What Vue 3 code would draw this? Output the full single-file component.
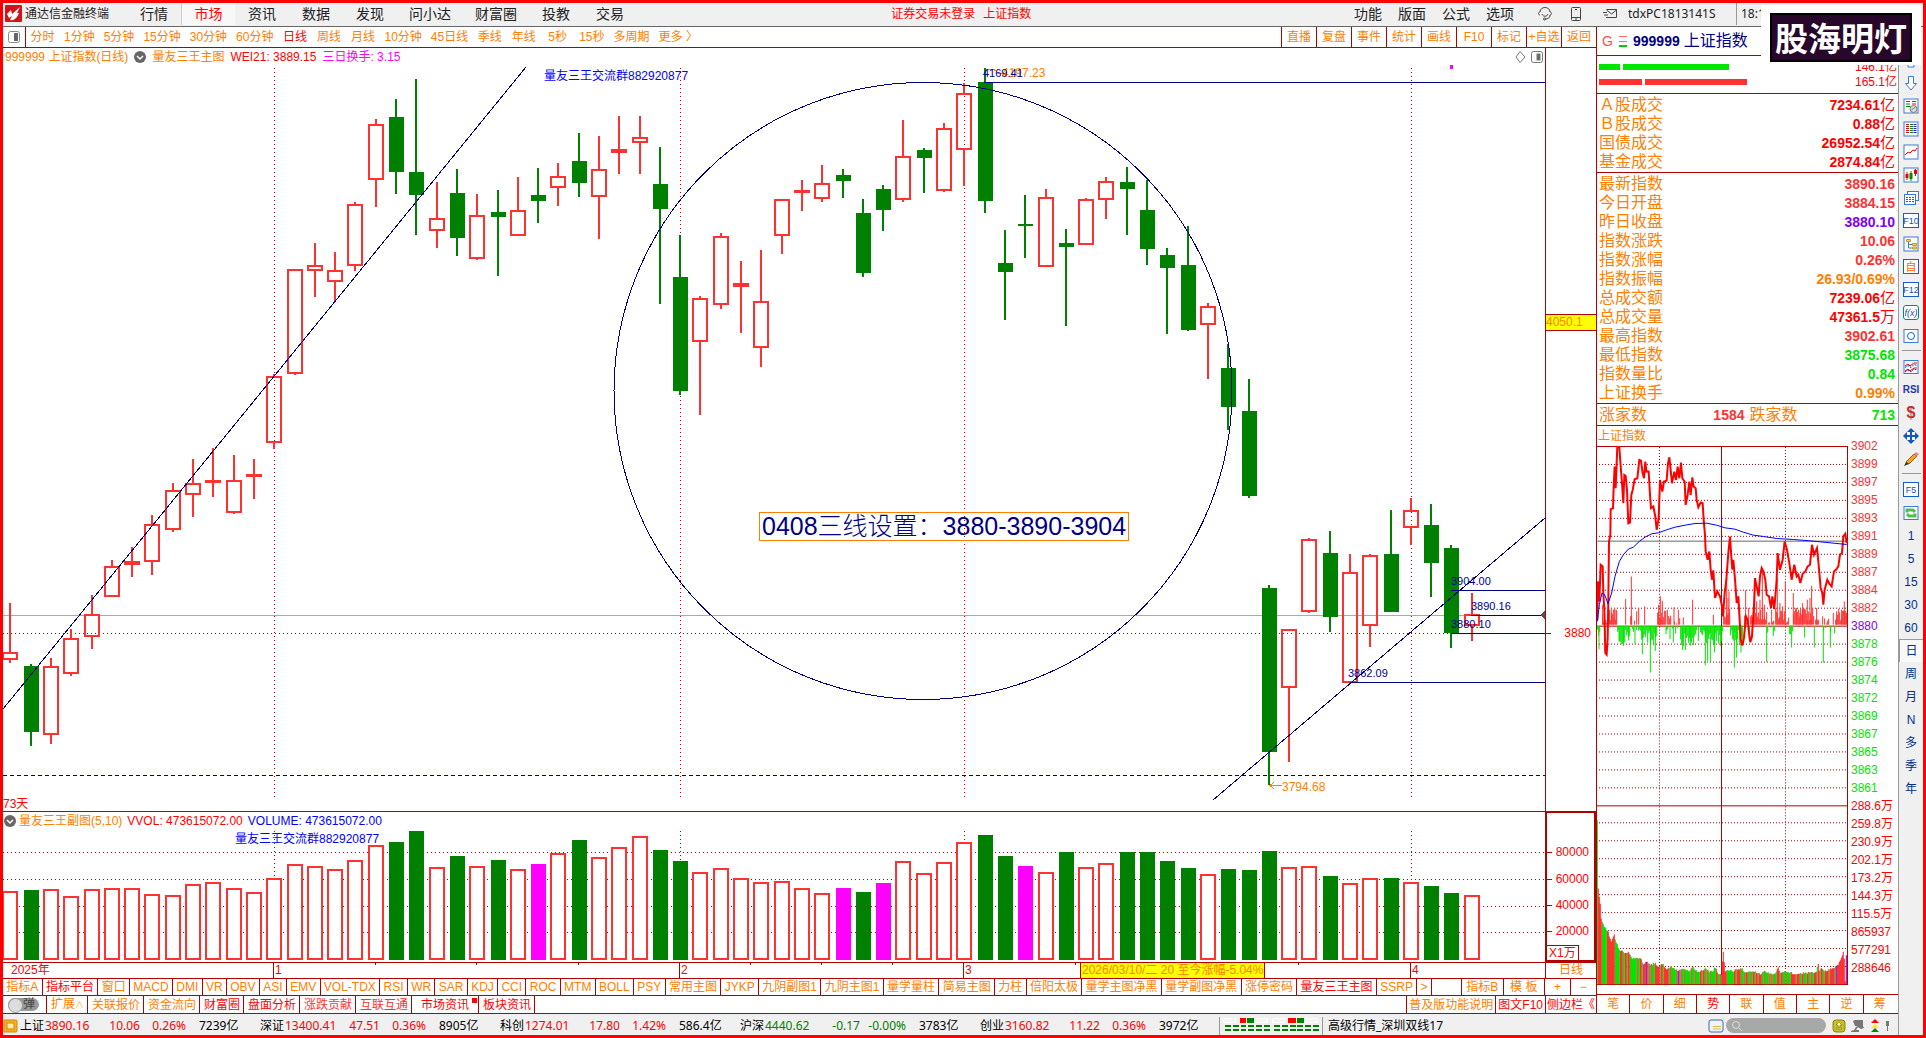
<script setup>
const menus = ['行情', '市场', '资讯', '数据', '发现', '问小达', '财富圈', '投教', '交易']
const tools = ['功能', '版面', '公式', '选项']
const periods = ['分时', '1分钟', '5分钟', '15分钟', '30分钟', '60分钟', '日线', '周线', '月线', '10分钟', '45日线', '季线', '年线', '5秒', '15秒', '多周期', '更多 〉']
const actions = ['直播', '复盘', '事件', '统计', '画线', 'F10', '标记', '+自选', '返回']

const indicators = ['指标A', '指标平台', '窗口', 'MACD', 'DMI', 'VR', 'OBV', 'ASI', 'EMV', 'VOL-TDX', 'RSI', 'WR', 'SAR', 'KDJ', 'CCI', 'ROC', 'MTM', 'BOLL', 'PSY', '常用主图', 'JYKP', '九阴副图1', '九阴主图1', '量学量柱', '简易主图', '力柱', '倍阳太极', '量学主图净黑', '量学副图净黑', '涨停密码', '量友三王主图', 'SSRP', '>']
const redTabs = ['指标平台', '量友三王主图']
const extras = [
  { t: '关联报价' }, { t: '资金流向' },
  { t: '财富圈', c: 'red' }, { t: '盘面分析', c: 'red' },
  { t: '涨跌贡献', c: 'soft' }, { t: '互联互通', c: 'soft' },
  { t: '市场资讯', c: 'red wide' }, { t: '板块资讯', c: 'red' },
]

const turnover = [
  ['Ａ股成交', '7234.61', '亿', 'r'], ['Ｂ股成交', '0.88', '亿', 'r'],
  ['国债成交', '26952.54', '亿', 'r'], ['基金成交', '2874.84', '亿', 'r'],
]
const stats = [
  ['最新指数', '3890.16', '', 's'], ['今日开盘', '3884.15', '', 's'], ['昨日收盘', '3880.10', '', 'p'],
  ['指数涨跌', '10.06', '', 's'], ['指数涨幅', '0.26%', '', 's'], ['指数振幅', '26.93/0.69%', '', 'o'],
  ['总成交额', '7239.06', '亿', 'r'], ['总成交量', '47361.5', '万', 'r'], ['最高指数', '3902.61', '', 's'],
  ['最低指数', '3875.68', '', 'g'], ['指数量比', '0.84', '', 'g'], ['上证换手', '0.99%', '', 'o'],
]
const quotes = [
  ['上证', '3890.16', '10.06', '0.26%', '7239亿', 'up'],
  ['深证', '13400.41', '47.51', '0.36%', '8905亿', 'up'],
  ['科创', '1274.01', '17.80', '1.42%', '586.4亿', 'up'],
  ['沪深', '4440.62', '-0.17', '-0.00%', '3783亿', 'down'],
  ['创业', '3160.82', '11.22', '0.36%', '3972亿', 'up'],
]
const panelTabs = ['笔', '价', '细', '势', '联', '值', '主', '逆', '筹']
const sideText = ['1', '5', '15', '30', '60', '日', '周', '月', 'N', '多', '季', '年']

/* daily bars: [kind, wick top, body top, body bottom, wick bottom, volume top] */
const raw = [
  ['r', 603, 652, 660, 663, 891], ['g', 664, 666, 732, 746, 890], ['r', 658, 666, 735, 744, 889], ['r', 629, 638, 674, 676, 896],
  ['r', 595, 614, 637, 649, 889], ['r', 560, 566, 597, 597, 888], ['r', 547, 561, 565, 577, 888], ['r', 515, 524, 562, 575, 894],
  ['r', 483, 490, 530, 532, 895], ['r', 459, 483, 495, 517, 884], ['r', 448, 480, 483, 497, 882], ['r', 455, 480, 513, 514, 888],
  ['r', 459, 474, 476, 499, 892], ['r', 374, 376, 443, 449, 878], ['r', 269, 269, 374, 375, 864], ['r', 243, 265, 271, 297, 866],
  ['r', 252, 270, 282, 301, 869], ['r', 202, 204, 266, 271, 860], ['r', 119, 124, 180, 207, 845], ['g', 99, 117, 172, 194, 842],
  ['g', 79, 172, 195, 235, 831], ['r', 182, 218, 231, 248, 867], ['g', 169, 193, 238, 256, 856], ['r', 194, 215, 259, 260, 866],
  ['g', 190, 212, 217, 276, 860], ['r', 177, 210, 236, 236, 869], ['g', 168, 195, 201, 223, 864, 'm'], ['r', 163, 176, 188, 206, 853],
  ['g', 133, 161, 183, 197, 840], ['r', 136, 169, 197, 239, 857], ['r', 116, 149, 153, 174, 847], ['r', 116, 137, 143, 174, 836],
  ['g', 147, 184, 209, 304, 850], ['g', 235, 277, 391, 395, 861], ['r', 296, 298, 342, 415, 872], ['r', 233, 236, 305, 309, 868],
  ['r', 261, 283, 287, 333, 878], ['r', 250, 301, 348, 367, 882], ['r', 199, 199, 236, 254, 881], ['r', 180, 190, 193, 211, 888],
  ['r', 165, 183, 199, 202, 893], ['g', 169, 175, 181, 198, 888, 'm'], ['g', 199, 213, 273, 277, 892], ['g', 185, 189, 210, 231, 883, 'm'],
  ['r', 120, 156, 200, 202, 861], ['g', 148, 150, 158, 193, 873, 'r'], ['r', 123, 128, 191, 192, 862], ['r', 83, 93, 150, 186, 842],
  ['g', 68, 82, 201, 213, 835], ['g', 230, 263, 272, 320, 856], ['g', 195, 224, 226, 258, 866, 'm'], ['r', 189, 197, 267, 267, 872],
  ['g', 229, 243, 247, 326, 852], ['r', 198, 199, 245, 245, 867], ['r', 177, 181, 200, 219, 863], ['g', 167, 182, 189, 235, 852],
  ['g', 180, 210, 249, 265, 852], ['g', 248, 255, 268, 334, 861], ['g', 226, 265, 330, 331, 868], ['r', 303, 306, 325, 379, 874],
  ['g', 344, 368, 407, 430, 869], ['g', 379, 411, 496, 498, 870], ['g', 585, 588, 752, 785, 851], ['r', 629, 629, 688, 762, 867],
  ['r', 538, 539, 612, 613, 866], ['g', 531, 553, 617, 632, 876], ['r', 554, 572, 683, 683, 883], ['r', 554, 555, 626, 647, 878],
  ['g', 510, 554, 612, 612, 878], ['r', 498, 510, 528, 545, 882], ['g', 504, 525, 563, 597, 886], ['g', 545, 548, 633, 648, 893],
  ['r', 593, 614, 626, 641, 895],
]
const bars = raw.map((b, i) => ({
  k: b[0], hi: b[1], top: b[2], bot: b[3], lo: b[4], vol: b[5], vk: b[6] || b[0], x: Math.round(10.4 + 20.297 * i),
}))
const months = [274, 680, 964, 1411]
const volGrid = [852, 879, 906, 932]
const volAxis = [['80000', 852], ['60000', 879], ['40000', 906], ['20000', 932]]
const ticks = [375, 476, 578, 750, 821, 892, 1075, 1298]
const dates = [['2025年', 11, ''], ['1', 273, 'mark'], ['2', 679, 'mark'], ['3', 963, 'mark'], ['4', 1410, 'mark']]

const at = (x, y) => ({ left: ((x - 3) / 1542) * 100 + '%', top: ((y - 48) / 763) * 100 + '%' })
const left = (x) => ({ left: ((x - 3) / 1542) * 100 + '%' })
const volTop = (y) => ({ top: ((y - 812) / 150) * 100 + '%' })
const priceTop = (y) => ({ top: ((y - 48) / 763) * 100 + '%' })

/* intraday panel, drawn in thirds of a pixel */
const hLines = Array.from({ length: 29 }, (_, i) => (i < 19 ? 464 + 18 * i : 805 + 18 * (i - 19))).filter((y) => y !== 626 && y < 985 && y !== 805 && y !== 806)
const scale = [
  '3902', '3899', '3897', '3895', '3893', '3891', '3889', '3887', '3884', '3882', '3880', '3878', '3876', '3874', '3872',
  '3869', '3867', '3865', '3863', '3861', '288.6万', '259.8万', '230.9万', '202.1万', '173.2万', '144.3万', '115.5万', '865937', '577291', '288646',
]
const scaleClass = (i) => (i < 10 ? 's' : i === 10 ? 'p' : i < 20 ? 'g' : 'r')

const pricePath = '52,600 54,485 58,545 62,435 68,440 70,520 73,570 76,700 80,705 83,655 85,540 87,365 91,345 92,268 99,265 101,200 104,140 107,205 112,80 118,82 121,125 126,190 130,250 133,165 137,168 141,210 145,310 150,308 154,225 158,210 164,178 172,175 178,120 183,122 188,160 192,175 196,125 199,155 206,155 210,225 213,265 220,260 226,290 230,330 236,295 240,180 247,215 252,185 260,182 264,130 268,112 272,150 276,190 283,155 288,180 293,140 298,175 303,128 307,175 314,185 317,255 323,225 328,185 332,225 337,172 341,200 347,205 350,240 355,262 362,248 368,250 371,300 375,345 377,395 383,420 388,395 392,450 396,480 400,452 405,535 412,515 420,530 426,560 429,590 434,520 439,480 445,400 450,350 454,410 457,450 460,420 466,490 470,550 475,530 479,600 482,660 487,678 492,655 498,590 503,600 507,640 511,668 516,650 519,600 522,560 525,475 530,500 536,530 540,470 545,445 550,455 556,480 560,525 567,530 573,565 577,530 583,568 590,480 593,400 600,450 608,420 614,365 621,390 628,430 635,480 643,435 650,470 655,465 661,490 668,462 676,455 683,440 690,435 696,375 702,405 711,385 716,435 722,505 727,520 730,555 734,510 742,480 748,492 755,500 762,455 768,450 775,440 780,405 786,400 790,350 796,342 800,370'
const meanPath = '52,605 58,555 66,520 74,525 84,552 95,520 105,470 118,425 130,405 145,388 160,382 178,365 195,352 215,342 235,339 260,330 285,322 315,316 345,311 380,310 410,316 435,324 465,328 490,337 520,346 550,350 590,356 640,359 700,364 750,369 800,374'

let seed = 7
const rnd = () => ((seed = (seed * 1103515245 + 12345) % 2147483648) / 2147483648)

const peaksUp = [[68, 60], [89, 46], [95, 46], [101, 46], [108, 46], [137, 77], [154, 145], [170, 40], [176, 50], [194, 55], [236, 60], [241, 85], [247, 72], [262, 45], [282, 52], [295, 45], [310, 22], [338, 75], [400, 30], [440, 140], [444, 80], [447, 100], [497, 103], [506, 50], [524, 120], [530, 70], [540, 75], [547, 170], [553, 60], [575, 45], [592, 140], [600, 65], [608, 55], [616, 130], [640, 95], [650, 50], [660, 35], [668, 65], [682, 75], [690, 80], [695, 117], [710, 50], [760, 35], [770, 40], [785, 45], [793, 70], [800, 35]]
const peaksDown = [[57, 70], [75, 75], [117, 45], [130, 60], [145, 35], [165, 55], [187, 85], [211, 140], [226, 75], [258, 25], [270, 40], [280, 50], [308, 72], [317, 72], [330, 45], [355, 45], [376, 118], [383, 105], [391, 110], [404, 80], [422, 60], [463, 125], [470, 95], [483, 80], [508, 45], [560, 108], [580, 30], [635, 65], [674, 35], [703, 65], [730, 110], [751, 65]]
const busyUp = [[86, 110], [232, 258], [430, 450], [515, 560], [586, 616], [640, 700], [765, 800]]
const busyDown = [[112, 150], [180, 232], [300, 345], [362, 432], [455, 488]]
const inside = (list, x) => list.some((s) => x >= s[0] && x <= s[1])
const pulse = []
for (let x = 53; x < 801; x += 3) {
  if (inside(busyUp, x)) pulse.push([x, 12 + rnd() * 38, 1])
  else if (inside(busyDown, x)) pulse.push([x, 10 + rnd() * 52, 0])
  else {
    const v = rnd()
    if (v < 0.42) pulse.push([x, 4 + rnd() * 26, 1])
    else if (v < 0.68) pulse.push([x, 4 + rnd() * 24, 0])
  }
}
peaksUp.forEach((p) => pulse.push([p[0], p[1], 1]))
peaksDown.forEach((p) => pulse.push([p[0], p[1], 0]))
const pulsePath = (dir) => pulse.filter((p) => p[2] === dir).map((p) => `M${p[0]} ${dir ? 615 : 619}v${dir ? -Math.round(p[1]) : Math.round(p[1])}`).join('')

const env = [[172, 125], [175, 327], [178, 352], [181, 375], [184, 417], [187, 430], [195, 445], [205, 460], [214, 487], [222, 465], [229, 487], [235, 507], [245, 517], [256, 522], [265, 520], [275, 537], [285, 540], [300, 535], [310, 555], [320, 550], [332, 557], [345, 552], [355, 562], [368, 553], [377, 570], [395, 562], [410, 575], [435, 570], [450, 577], [459, 564], [468, 575], [480, 579], [495, 568], [508, 577], [519, 578], [525, 564], [535, 587], [545, 585], [549, 508], [555, 575], [580, 575], [605, 568], [615, 582], [645, 576], [660, 587], [670, 577], [705, 588], [714, 562], [720, 582], [738, 576], [760, 584], [800, 582], [830, 580], [834, 552], [839, 578], [844, 565], [852, 577], [870, 571], [885, 565], [897, 552], [905, 535], [912, 515], [916, 608], [921, 478]]
const minute = []
for (let x = 172, color = 'g'; x <= 921; x += 3) {
  const k = env.findIndex((e) => e[0] >= x)
  const b = env[k]
  const a = env[k - 1] || b
  const y = b[0] === a[0] ? b[1] : a[1] + ((b[1] - a[1]) * (x - a[0])) / (b[0] - a[0])
  if (rnd() < 0.42) color = color === 'g' ? 's' : 'g'
  let c = color
  if (x > 888 || (x > 173 && x < 185) || (x > 199 && x < 215) || (x > 545 && x < 560)) c = 's'
  if (x === 172 || (x > 185 && x < 199)) c = 'g'
  if (x === 319 || x === 415 || x >= 919 || x === 889) c = 'p'
  minute.push({ x, y: Math.round(y + (rnd() - 0.5) * 6), c })
}
const minutePath = (c) => minute.filter((m) => m.c === c).map((m) => `M${m.x} 616V${m.y}`).join('')
const board = Array.from({ length: 6 }, (_, i) => i)
</script>

<template>
  <div class="app">
    <header class="titlebar">
      <svg class="logo" viewBox="0 0 17 17"><rect width="17" height="17" rx="1" fill="#d3121a" /><path d="M2 9l4-4 1 4 8-7-3 6 2 0c-2 5-5 8-9 7l2-4-3 2z" fill="#fff" /></svg>
      <span class="brand">通达信金融终端</span>
      <nav class="menu">
        <button v-for="m in menus" :key="m" type="button" :class="{ on: m === '市场' }">{{ m }}</button>
      </nav>
      <div class="notice"><span>证券交易未登录</span><span>上证指数</span></div>
      <nav class="tools">
        <button v-for="t in tools" :key="t" type="button">{{ t }}</button>
      </nav>
      <div class="user">
        <svg width="16" height="16" viewBox="0 0 16 16" fill="none" stroke="#444"><path d="M3 9C1 9 1 6 3 6 3 0 13 0 13 6c2 0 2 3 0 3M13 9c0 3-2 4-5 4" /><path d="M5 8c1 3 5 3 6 0" /><circle cx="7.500" cy="13" r="1" /></svg>
        <svg width="12" height="16" viewBox="0 0 12 16" fill="none" stroke="#444"><rect x="1.500" y="1.500" width="9" height="13" rx="1" /><path d="M2 11.500h8M5 13h2M5 3.500h2" /></svg>
        <svg width="16" height="16" viewBox="0 0 16 16" fill="none" stroke="#444"><path d="M4.500 3.500h10v8h-8M4.500 4l5 4 5-4M1 6.500h4M2 9h4M4 11.500h3" /></svg>
        <span class="account">tdxPC1813141S</span>
        <span class="clock">18:1</span>
      </div>
    </header>

    <div class="body">
      <main class="main">
        <div class="toolbar">
          <button class="pane-btn" type="button" aria-label="侧栏"><svg width="12" height="12" viewBox="0 0 12 12"><rect x=".5" y=".5" width="11" height="11" rx="2" fill="#fff" stroke="#888" /><rect x="6" y="2" width="4" height="8" fill="#666" /></svg></button>
          <div class="periods">
            <button v-for="p in periods" :key="p" type="button" :class="{ on: p === '日线' }">{{ p }}</button>
          </div>
          <div class="actions">
            <button v-for="a in actions" :key="a" type="button">{{ a }}</button>
          </div>
        </div>

        <div class="chart-row price">
          <section class="plot">
            <svg class="fill" viewBox="3 48 1542 763" preserveAspectRatio="none" shape-rendering="crispEdges">
              <g stroke="#b00000" stroke-dasharray="1 3">
                <path v-for="m in months" :key="m" :d="`M${m + 0.5} 68V797`" />
                <path d="M3 633.500H1451" />
              </g>
              <path d="M3 615.500H1471" stroke="#aaa" />
              <g v-for="(b, i) in bars" :key="i">
                <template v-if="b.k === 'g'">
                  <rect :x="b.x - 1" :y="b.hi" width="2" :height="b.lo - b.hi" fill="#008000" />
                  <rect :x="b.x - 7" :y="b.top" width="15" :height="Math.max(2, b.bot - b.top)" fill="#008000" />
                </template>
                <template v-else>
                  <rect :x="b.x - 1" :y="b.hi" width="2" :height="b.top - b.hi" fill="#ff3232" />
                  <rect :x="b.x - 1" :y="b.bot" width="2" :height="b.lo - b.bot" fill="#ff3232" />
                  <rect :x="b.x - 7" :y="b.top + 1" width="14" :height="Math.max(0.500, b.bot - b.top - 2)" fill="none" stroke="#ff3232" stroke-width="2" />
                </template>
              </g>
              <g stroke="#000080" fill="none">
                <path d="M3 775.500H1545" stroke-dasharray="4 3" />
                <path d="M984 82.500H1545M1451 590.500H1545M1471 615.500H1545M1451 633.500H1545M1350 682.500H1545" />
                <path d="M3 709L526 67M1213 800L1545 518" />
                <ellipse cx="923" cy="391" rx="309" ry="308.500" />
              </g>
              <path d="M1540 615l5-4v8z" fill="#555" />
              <path d="M1270 785.500h12M1274 782l-4 3.500 4 3.500" stroke="#ff8000" fill="none" />
              <path d="M986 69.500h8l5 4h4" stroke="#ff8000" fill="none" />
              <rect x="1450" y="65" width="3" height="4" fill="#f0f" />
            </svg>
            <div class="caption">
              <span>999999 上证指数(日线)</span>
              <svg width="12" height="12" viewBox="0 0 12 12"><circle cx="6" cy="6" r="6" fill="#666" /><path d="M3 5l3 3 3-3" stroke="#fff" stroke-width="1.500" fill="none" /></svg>
              <span>量友三王主图</span>
              <span class="red">WEI21: 3889.15</span>
              <span class="magenta">三日换手: 3.15</span>
              <svg class="corner" width="28" height="14" viewBox="0 0 28 14" fill="none" stroke="#777"><path d="M5 1.500L10 7 5 12.500 1 7z" /><rect x="16.500" y="1.500" width="11" height="11" rx="2" /><rect x="22" y="4" width="3" height="6" fill="#666" /></svg>
            </div>
            <span class="tag blue" :style="at(544, 76)">量友三王交流群882920877</span>
            <span class="tag orange" :style="at(1002, 73)">4197.23</span>
            <span class="tag small navy" :style="at(983, 73)">4169.41</span>
            <span class="tag small navy" :style="at(1451, 581)">3904.00</span>
            <span class="tag small navy" :style="at(1471, 606)">3890.16</span>
            <span class="tag small navy" :style="at(1451, 624)">3880.10</span>
            <span class="tag small navy" :style="at(1348, 673)">3862.09</span>
            <span class="tag orange" :style="at(1282, 787)">3794.68</span>
            <span class="tag red" :style="at(3, 804)">73天</span>
            <div class="memo" :style="at(759, 512)">0408三线设置：3880-3890-3904</div>
          </section>
          <aside class="axis">
            <span class="cursor" :style="priceTop(314)">4050.1</span>
            <span class="level" :style="priceTop(633)">3880</span>
          </aside>
        </div>

        <div class="chart-row volume">
          <section class="plot">
            <svg class="fill" viewBox="3 812 1542 150" preserveAspectRatio="none" shape-rendering="crispEdges">
              <g stroke="#b00000" stroke-dasharray="1 3">
                <path v-for="m in months" :key="m" :d="`M${m + 0.5} 831V962`" />
                <path v-for="y in volGrid" :key="y" :d="`M3 ${y + 0.5}H1545`" />
              </g>
              <template v-for="(b, i) in bars" :key="i">
                <rect v-if="b.vk === 'r'" :x="b.x - 7" :y="b.vol + 1" width="14" :height="958 - b.vol" fill="#fff" stroke="#ff3232" stroke-width="2" />
                <rect v-else :x="b.x - 7" :y="b.vol" width="15" :height="960 - b.vol" :fill="b.vk === 'm' ? '#f0f' : '#008000'" />
              </template>
            </svg>
            <div class="caption vol">
              <svg width="12" height="12" viewBox="0 0 12 12"><circle cx="6" cy="6" r="6" fill="#666" /><path d="M3 5l3 3 3-3" stroke="#fff" stroke-width="1.500" fill="none" /></svg>
              <span>量友三王副图(5,10)</span>
              <span class="red">VVOL: 473615072.00</span>
              <span class="blue">VOLUME: 473615072.00</span>
            </div>
            <span class="tag blue" :style="{ ...left(235), ...volTop(839) }">量友三王交流群882920877</span>
          </section>
          <aside class="axis boxed">
            <span v-for="v in volAxis" :key="v[0]" class="level" :style="volTop(v[1])">{{ v[0] }}</span>
            <span class="unit">X1万</span>
          </aside>
        </div>

        <div class="chart-row dates">
          <div class="plot">
            <i v-for="t in ticks" :key="t" class="tick" :style="left(t)"></i>
            <span v-for="d in dates" :key="d[0]" :class="['date', d[2]]" :style="left(d[1])">{{ d[0] }}</span>
            <span class="date hot" :style="left(1080)">2026/03/10/二 20 至今涨幅-5.04%</span>
          </div>
          <aside class="axis mid">日线</aside>
        </div>

        <div class="tabs">
          <div class="tab-list">
            <button v-for="t in indicators" :key="t" type="button" :class="{ red: redTabs.includes(t) }">{{ t }}</button>
          </div>
          <div class="gap"></div>
          <div class="tab-end">
            <button type="button">指标B</button><button type="button">模 板</button>
          </div>
          <div class="zoomers"><button type="button">+</button><button type="button">−</button></div>
        </div>

        <div class="tabs second">
          <label class="switch"><input type="checkbox" /><span>弹</span></label>
          <button type="button" class="expand">扩展<small>∧</small></button>
          <button v-for="e in extras" :key="e.t" type="button" :class="e.c">{{ e.t }}</button>
          <div class="gap grow"></div>
          <button type="button" class="tight">普及版功能说明</button>
          <button type="button" class="red tight">图文F10</button>
          <button type="button" class="red side-open">侧边栏《</button>
        </div>
      </main>

      <section class="panel">
        <h1 class="stock"><em>G</em><svg width="8" height="12" viewBox="0 0 8 12" shape-rendering="crispEdges"><path d="M0 1.500h8" stroke="#f66" /><path d="M0 6.500h8" stroke="#999" /><path d="M0 10.500h8" stroke="#0c0" stroke-width="2" /></svg><b>999999</b><span>上证指数</span></h1>
        <div class="flow">
          <div class="flow-row"><i class="fg a"></i><i class="fg b"></i><span>146.1亿</span></div>
          <div class="flow-row"><i class="fr a"></i><i class="fr b"></i><span>165.1亿</span></div>
        </div>
        <div class="group">
          <table><tbody><tr v-for="r in turnover" :key="r[0]"><th scope="row">{{ r[0] }}</th><td :class="r[3]">{{ r[1] }}<i>{{ r[2] }}</i></td></tr></tbody></table>
        </div>
        <div class="group">
          <table><tbody><tr v-for="r in stats" :key="r[0]"><th scope="row">{{ r[0] }}</th><td :class="r[3]">{{ r[1] }}<i v-if="r[2]">{{ r[2] }}</i></td></tr></tbody></table>
        </div>
        <div class="breadth"><span>涨家数</span><b class="s">1584</b><span>跌家数</span><b class="g">713</b></div>
        <div class="mini-title">上证指数</div>
        <div class="mini">
          <svg viewBox="1597 446 251 540" preserveAspectRatio="none">
            <g stroke="#b00000" fill="none" shape-rendering="crispEdges">
              <g stroke-dasharray="1 2">
                <path v-for="y in hLines" :key="y" :d="`M1599 ${y + 0.5}H1847`" />
                <path d="M1659.500 447V985M1785.500 447V985" />
              </g>
              <path d="M1597 446.500H1848M1597 626.500H1848M1597 806.500H1848M1597 985.500H1848M1721.500 446V986M1847.500 446V986" />
            </g>
            <g transform="translate(1580 420) scale(.3333)" fill="none" stroke-width="3">
              <path :d="pulsePath(1)" stroke="#ff3232" />
              <path :d="pulsePath(0)" stroke="#00e600" />
              <path d="M52 364H802" stroke="#666" />
              <polyline :points="pricePath" stroke="#f00" stroke-width="6" />
              <polyline :points="meanPath" stroke="#00f" />
            </g>
            <g transform="translate(1540 780) scale(.3333)" fill="none" stroke-width="3.200">
              <path :d="minutePath('g')" stroke="#00e600" />
              <path :d="minutePath('s')" stroke="#ff3232" />
              <path :d="minutePath('p')" stroke="#8000ff" />
            </g>
          </svg>
          <div class="scale"><span v-for="(s, i) in scale" :key="s" :class="scaleClass(i)">{{ s }}</span></div>
        </div>
        <div class="panel-tabs">
          <button v-for="t in panelTabs" :key="t" type="button" :class="{ red: t === '势' }">{{ t }}</button>
        </div>
      </section>

      <nav class="side">
        <button type="button" aria-label="上"><svg viewBox="0 0 16 16" fill="#fff" stroke="#3c78d8"><path d="M8 1l6 6h-3v8H5V7H2z" /></svg></button>
        <button type="button" aria-label="下"><svg viewBox="0 0 16 16" fill="#fff" stroke="#3c78d8"><path d="M5.500 1.500h5v7h3L8 15 2.500 8.500h3z" /></svg></button>
        <button type="button" aria-label="报价"><svg viewBox="0 0 16 16" fill="none"><rect x="1" y="1" width="14" height="14" fill="#fff" stroke="#3c78d8" /><path d="M3 3.500h4M3 6h4M3 8.500h4" stroke="#008000" /><path d="M9 3.500h4M9 6h4" stroke="#f00" /><circle cx="10.500" cy="11" r="3.500" fill="#ddd" stroke="#777" /><path d="M8.500 12l4-3" stroke="#777" /></svg></button>
        <button type="button" aria-label="列表"><svg viewBox="0 0 16 16" fill="none" stroke-width="3" stroke-dasharray="1 1"><rect x="1" y="1" width="14" height="14" fill="#fff" stroke="#3c78d8" stroke-width="1" stroke-dasharray="none" /><path d="M4.500 3v10" stroke="#e00" /><path d="M8.500 3v10" stroke="#080" /><path d="M12 3v10" stroke="#22c" /></svg></button>
        <button type="button" aria-label="走势"><svg viewBox="0 0 16 16" fill="none"><rect x="1" y="1" width="14" height="14" fill="#fff" stroke="#3c78d8" /><path d="M2 11l3-3 2 1 3-3 2 1 2-3" stroke="#e00" /></svg></button>
        <button type="button" aria-label="K线"><svg viewBox="0 0 16 16" fill="none"><rect x="1" y="1" width="14" height="14" fill="#fff" stroke="#3c78d8" /><path d="M4 5v8M12.500 2v7" stroke="#e00" /><path d="M8 4v10" stroke="#080" /><path d="M4 7v4M12.500 3v4" stroke="#e00" stroke-width="3" /><path d="M8 6v6" stroke="#080" stroke-width="3" /></svg></button>
        <button type="button" aria-label="资料"><svg viewBox="0 0 16 16" fill="#fff" stroke="#3c78d8"><rect x="4.500" y="1.500" width="11" height="9" /><rect x="1.500" y="4.500" width="11" height="10" /><path d="M3 7.500h8M3 9.500h8M3 11.500h8" stroke="#555" stroke-dasharray="2 1" /></svg></button>
        <button type="button" class="key">F10</button>
        <button type="button" aria-label="板块"><svg viewBox="0 0 16 16" fill="none"><rect x="1" y="1" width="14" height="14" fill="#fff" stroke="#3c78d8" /><path d="M5.500 6v6h4M5.500 8.500h4" stroke="#3c78d8" /><path d="M3.500 3.500h4v2h-4zM9.500 7.500h4v2h-4zM9.500 11h4v2h-4z" fill="#fd4" stroke="#c90" /></svg></button>
        <button type="button" class="key self">自</button>
        <button type="button" class="key">F12</button>
        <button type="button" class="key fx">f(x)</button>
        <button type="button" aria-label="圈"><svg viewBox="0 0 16 16" fill="#fff" stroke="#3c78d8"><rect x="1" y="1.500" width="14" height="13" /><circle cx="8" cy="8" r="3.500" stroke="#06c" /></svg></button>
        <hr />
        <button type="button" aria-label="波动"><svg viewBox="0 0 16 16" fill="none"><rect x="1" y="1.500" width="14" height="13" fill="#fff" stroke="#3c78d8" /><path d="M2 7l3-2 2 2 4-3 3 0M2 12l3-2 2 2 4-3 3 0" stroke="#e00" /><path d="M2 8.500l3-2 3 2 3-3 3 1M2 13l3-2 3 2 3-3 3 1" stroke="#22c" stroke-dasharray="2 1" /></svg></button>
        <button type="button" class="rsi">RSI</button>
        <button type="button" class="dollar">$</button>
        <button type="button" aria-label="移动"><svg viewBox="0 0 16 16" fill="#1458b8"><path d="M8 0l4 4H4zM8 16l4-4H4zM0 8l4-4v8zM16 8l-4-4v8z" /><path d="M7 3h2v10H7zM3 7h10v2H3z" /><path d="M5 5h2v2H5zM9 5h2v2H9zM5 9h2v2H5zM9 9h2v2H9z" fill="#fff" /></svg></button>
        <button type="button" aria-label="画笔"><svg viewBox="0 0 16 16"><path d="M3 11L11 3l3 2-8 8z" fill="#f5a623" stroke="#a05a10" /><path d="M11 3l2-2 3 2-2 2z" fill="#e88" /><path d="M1 15l2-4 3 2z" fill="#333" /></svg></button>
        <hr />
        <button type="button" class="key">F5</button>
        <button type="button" aria-label="刷新"><svg viewBox="0 0 16 16" fill="none"><rect x="1" y="1.500" width="14" height="13" fill="#fff" stroke="#3c78d8" /><path d="M4 7.500V5h6L12 7M12 8.500V11H6L4 9" stroke="#5b5" stroke-width="3" /></svg></button>
        <button v-for="t in sideText" :key="t" type="button" :class="{ day: t === '日' }">{{ t }}</button>
      </nav>

      <footer class="status">
        <svg width="16" height="16" viewBox="0 0 16 16"><rect x="1" y="2" width="13" height="12" rx="1" fill="#f5b21c" stroke="#c88a10" /><rect x="4" y="5" width="7" height="6" fill="#fde9a8" stroke="#c88a10" /></svg>
        <div v-for="q in quotes" :key="q[0]" :class="['quote', q[5]]">
          <span class="name">{{ q[0] }}</span><span class="last">{{ q[1] }}</span><span class="chg">{{ q[2] }}</span><span class="pct">{{ q[3] }}</span><span class="amt">{{ q[4] }}</span>
        </div>
        <svg class="board" width="104" height="18" viewBox="0 0 104 18" shape-rendering="crispEdges">
          <path d="M4 1.500h12v4H4zM36 1.500h12v4H36zM54 1.500h12v4H54zM87 1.500h12v4H87z" fill="#f4f4f4" stroke="#fff" />
          <path d="M20 1h7v5h-7zM69 1h8v5h-8z" fill="#f00" /><path d="M28 1h7v5h-7zM78 1h8v5h-8z" fill="#008000" />
          <g fill="#008000">
            <template v-for="i in board" :key="i"><rect :x="5 + i * 8" y="8" width="6" height="2" /><rect :x="5 + i * 8" y="12" width="6" height="2" /><rect :x="55 + i * 8" y="8" width="6" height="2" /><rect :x="55 + i * 8" y="12" width="6" height="2" /></template>
          </g>
        </svg>
        <span class="server">高级行情_深圳双线17</span>
        <div class="status-end">
          <svg width="16" height="14" viewBox="0 0 16 14"><rect x="1" y="1" width="14" height="12" rx="2" fill="#eef4ff" stroke="#46a" /><path d="M5 7.500h8M5 10h8" stroke="#db3" /></svg>
          <label class="search"><svg width="12" height="12" viewBox="0 0 12 12" fill="none" stroke="#ddd"><circle cx="5" cy="5" r="3.500" /><path d="M8 8l3 3" /></svg><input type="text" aria-label="搜索" /></label>
          <svg width="14" height="14" viewBox="0 0 14 14"><rect x="1" y="1" width="12" height="12" rx="3" fill="#c8c020" stroke="#8a8410" /><path d="M7 3l3 3H8v2H6V6H4zM4 9h6v1H4z" fill="#fff7b0" stroke="#6a6408" stroke-width=".5" /></svg>
          <svg width="14" height="14" viewBox="0 0 14 14" fill="#777"><path d="M2 2l2-1h8v6l1 2-3 1-5-3-1 0zM7 8l-2 3h3v2H0v-1l3-1 2-3z" /></svg>
          <svg width="10" height="14" viewBox="0 0 10 14"><path d="M5 0l4 4H1z" fill="#f00" /><path d="M5 5l4 4H1z" fill="#fe0" /><path d="M5 9l4 4H1z" fill="#080" /></svg>
          <svg width="5" height="12" viewBox="0 0 5 12" fill="#777"><path d="M1 1h3v5H1zM2 6h1v5H2z" /></svg>
        </div>
      </footer>
    </div>

    <div class="badge"><strong>股海明灯</strong></div>
  </div>
</template>

<style>
body { margin: 0; background: #fff; }
</style>

<style scoped>
* { box-sizing: border-box; }
.app {
  --line: #b00000;
  --orange: #ff8000;
  --bar: #f0f0f0;
  position: relative;
  height: 100vh;
  min-height: 900px;
  display: flex;
  flex-direction: column;
  border: 3px solid #f00;
  background: #fff;
  color: var(--orange);
  font: 12px/14px "Liberation Sans", "Noto Sans CJK SC", sans-serif;
  white-space: nowrap;
  overflow: hidden;
}
button {
  margin: 0; padding: 0; border: 0; background: none; color: inherit; font: inherit; white-space: nowrap; cursor: pointer;
}
svg { display: block; flex: none; }
i, em { font-style: normal; }
.red { color: #f00; }
.soft { color: #ff3232; }
.blue { color: #00f; }
.navy { color: #000090; }
.orange { color: var(--orange); }
.magenta { color: #f0f; }
.r { color: #f00; }
.s { color: #ff3232; }
.g { color: #00e600; }
.p { color: #8000ff; }
.o { color: var(--orange); }

.titlebar {
  flex: none; height: 24px; display: flex; align-items: center; position: relative; padding-bottom: 2px;
  background: var(--bar); border-bottom: 1px solid #666; color: #222;
  font-family: "Noto Sans", "Noto Sans CJK SC", sans-serif;
}
.logo { width: 17px; height: 17px; margin: 0 3px 0 2px; }
.brand { width: 102px; }
.menu { display: flex; height: 22px; font-size: 14px; }
.menu button { min-width: 54px; padding: 0 12px; }
.menu .on { color: #f00; background: #f8f8f8; border-left: 1px solid #ccc; }
.notice { position: absolute; left: 46%; display: flex; gap: 8px; margin-left: 5px; color: #f00; }
.tools { margin-left: auto; display: flex; gap: 16px; font-size: 14px; }
.user { display: flex; align-items: center; height: 22px; width: 409px; padding-left: 23px; }
.user svg { margin-right: 17px; }
.user svg:nth-child(2) { margin-right: 20px; }
.user svg:nth-child(3) { margin-right: 10px; }
.account { width: 108px; }
.clock { border-left: 1px solid #999; height: 22px; padding-left: 4px; line-height: 22px; }

.body {
  flex: 1; min-height: 0; display: grid;
  grid-template-columns: minmax(0, 1fr) 302px 25px;
  grid-template-rows: minmax(0, 1fr) 22px;
}
.main { display: flex; flex-direction: column; min-width: 0; min-height: 0; }

.toolbar { flex: none; height: 21px; display: flex; border-bottom: 1px solid var(--line); }
.pane-btn { width: 23px; padding-left: 5px; border-right: 1px solid var(--line); }
.periods { display: flex; gap: 9px; padding-left: 4px; }
.periods button { min-width: 25px; }
.periods .on { color: #f00; }
.actions { margin-left: auto; display: flex; }
.actions button { width: 35px; border-left: 1px solid var(--line); }

.chart-row { display: flex; min-height: 0; }
.plot { flex: 1; position: relative; min-width: 0; }
.axis { flex: none; width: 51px; position: relative; border-left: 1px solid var(--line); color: #f00; }
.price { flex: 763 1 0; overflow: hidden; }
.volume { flex: none; height: 151px; border-top: 1px solid var(--line); }
.fill { position: absolute; left: 0; top: 0; width: 100%; height: 100%; }
.caption { position: relative; display: flex; align-items: center; gap: 6px; padding: 1px 2px; height: 18px; }
.caption.vol { gap: 5px; padding: 0 1px 1px; }
.vol svg { margin-right: -2px; }
.corner { margin-left: auto; }
.tag { position: absolute; margin-top: -7px; }
.small { font-size: 11px; }
.memo {
  position: absolute; height: 29px; padding: 0 2px; border: 1px solid var(--orange); color: #000080;
  font-size: 25px; line-height: 27px; font-weight: 300;
}
.cursor { position: absolute; left: 0; right: 0; height: 17px; line-height: 15px; background: #ff0; border: solid var(--line); border-width: 1px 0; color: var(--orange); }
.level { position: absolute; right: 5px; margin-top: -7px; }
.price .level::before, .volume .level::before { content: ""; position: absolute; top: 7px; width: 5px; height: 1px; background: var(--line); }
.price .level::before { left: -18px; }
.volume .level::before { left: -9px; }
.boxed { border: 2px solid var(--line); border-width: 1px 2px 2px; }
.unit { position: absolute; left: 0; bottom: 0; padding: 0 2px; border: solid var(--line); border-width: 1px 1px 0 0; }

.dates { flex: none; height: 16px; border-top: 1px solid var(--line); color: #f00; }
.date { position: absolute; top: 0; height: 15px; line-height: 15px; }
.mark { border-left: 1px solid var(--line); padding-left: 1px; }
.hot { background: #ff0; color: var(--orange); border: solid var(--line); border-width: 0 1px; padding: 0 1px; }
.tick { position: absolute; top: 0; width: 1px; height: 2px; background: var(--line); }
.mid { text-align: center; color: var(--orange); line-height: 15px; }

.tabs { flex: none; height: 17px; display: flex; border-top: 1px solid var(--line); }
.tabs button { border-right: 1px solid var(--line); padding: 0 3px; }
.tab-list { display: flex; flex: 1429 1 0; min-width: 0; }
.tab-list button { flex: 1 1 auto; padding: 0; }
.gap { flex: none; width: 30px; border-right: 1px solid var(--line); }
.gap.grow { flex: 1; }
.tab-end { display: flex; width: 83px; }
.tab-end button { flex: 1; }
.zoomers { display: flex; width: 51px; }
.zoomers button { flex: 1; }
.zoomers button:last-child { border-right: 0; }
.second { height: 18px; }
.second button { padding: 0 3px 0 4px; }
.expand small { font-size: 9px; opacity: .7; }
.second .expand { width: 41px; }
.second .wide { position: relative; padding: 0 9px; }
.wide::after { content: ""; position: absolute; right: 1px; top: 2px; width: 5px; height: 5px; background: #f00; }
.second .tight { padding: 0 2px; }
.second .side-open { width: 50px; padding: 0 1px; border-right: 0; text-align: left; overflow: hidden; }
.switch { position: relative; width: 44px; padding: 2px 0 0 5px; border-right: 1px solid var(--line); color: #444; }
.switch input { appearance: none; display: block; margin: 0; width: 31px; height: 13px; border-radius: 7px; background: #999; }
.switch input::before { content: ""; display: block; width: 13px; height: 13px; border-radius: 50%; background: #ddd; border: 1px solid #999; }
.switch span { position: absolute; left: 20px; top: 1px; }

.panel { display: flex; flex-direction: column; border-left: 1px solid var(--line); min-height: 0; overflow: hidden; }
.stock { flex: none; margin: 0; height: 29px; display: flex; align-items: center; padding: 0 0 1px 5px; border-bottom: 1px solid var(--line); color: #000080; font-size: 14px; font-weight: 400; }
.stock em { width: 17px; color: #ff5050; }
.stock svg { margin-right: 6px; }
.stock span { font-size: 16px; margin-left: 4px; }
.flow { flex: none; height: 38px; padding: 3px 0 0 2px; border-bottom: 1px solid var(--line); color: #f00; }
.flow-row { display: flex; align-items: center; gap: 3px; height: 15px; padding-right: 1px; }
.flow-row span { margin-left: auto; }
.flow-row i { height: 6px; }
.fg { background: #00e600; }
.fr { background: #ff3232; }
.fg.a { width: 21px; }
.fg.b { width: 106px; }
.fr.a { width: 43px; }
.fr.b { width: 102px; }
.group { flex: none; padding: 1px 0; border-bottom: 1px solid var(--line); }
table { width: 100%; border-collapse: collapse; }
tr { height: 19px; }
th, td { padding: 0; font-size: 16px; line-height: 18px; }
th { padding-left: 2px; text-align: left; font-weight: 400; }
td { padding-right: 3px; text-align: right; font-size: 14px; font-weight: 700; }
td i { font-size: 15px; line-height: 1px; font-weight: 400; }
.breadth { flex: none; height: 22px; display: flex; align-items: center; padding: 0 3px 0 2px; border-bottom: 1px solid var(--line); font-size: 16px; }
.breadth b { font-size: 14px; font-weight: 700; flex: 1; text-align: right; padding-right: 5px; }
.breadth b:last-child { padding: 0; }
.mini-title { flex: none; height: 20px; padding: 3px 1px; }
.mini { flex: 540 1 0; display: flex; min-height: 0; }
.mini svg { flex: 1; min-width: 0; height: 100%; }
.scale { flex: none; width: 50px; padding-left: 3px; display: flex; flex-direction: column; height: 100%; margin-top: -9px; }
.scale span { flex: 1; line-height: 18px; }
.panel-tabs { flex: none; height: 19px; margin-top: 9px; display: flex; border-top: 1px solid var(--line); }
.panel-tabs button { flex: 1; border-right: 1px solid var(--line); }
.panel-tabs button:last-child { border-right: 0; padding-right: 2px; }

.side {
  grid-column: 3; grid-row: 1 / 3; display: flex; flex-direction: column; align-items: stretch; padding-top: 21px;
  background: var(--bar); border-left: 1px solid #999; color: #003088; overflow: hidden;
}
.side button { flex: none; height: 23px; display: flex; align-items: center; justify-content: center; }
.side svg { width: 16px; height: 16px; }
.side hr { flex: none; width: 19px; height: 1px; margin: 3px auto 4px; border: 0; background: #999; }
.side .key { width: 16px; height: 15px; margin: 4px auto; background: #fff; border: 1px solid #1460c8; font-size: 9px; line-height: 12px; color: #1450b8; }
.side .self { color: #f60; font-size: 11px; }
.side .fx { border-color: #088; border-radius: 3px; font-style: italic; }
.side .rsi { font-size: 10px; font-weight: 700; color: #2838a8; }
.side .dollar { font-size: 16px; font-weight: 700; color: #c03030; }
.side .day { background: #f8f8f8; border: 1px solid #999; border-width: 1px 0 0 1px; }

.status {
  grid-column: 1 / 3; display: flex; align-items: center; padding-top: 2px; background: var(--bar); border-top: 1px solid var(--line); color: #000;
  font-family: "Noto Sans", "Noto Sans CJK SC", sans-serif; overflow: hidden;
}
.quote { display: flex; width: 240px; padding-left: 1px; }
.name { width: 25px; }
.last { width: 55px; }
.chg { width: 40px; text-align: right; }
.pct { width: 46px; text-align: right; }
.amt { padding-left: 13px; }
.up .last, .up .chg, .up .pct { color: #f00; }
.down .last, .down .chg, .down .pct { color: #008000; }
.board { border: solid #999; border-width: 0 1px; }
.server { padding-left: 5px; }
.status-end { margin-left: auto; display: flex; align-items: center; gap: 5px; padding-right: 8px; }
.search { display: flex; align-items: center; width: 100px; height: 15px; margin: 0 1px 0 -3px; padding-left: 5px; border-radius: 8px; background: #a8a8a8; }
.search input { width: 70px; height: 13px; padding: 0; border: 0; outline: 0; background: none; }

.badge {
  position: absolute; top: 2px; right: 2px; width: 160px; height: 60px; padding: 8px 9px 3px; background: #fff;
}
.badge strong {
  display: flex; align-items: center; justify-content: center; height: 49px; background: #28082a; border: 2px solid #000;
  color: #fff; font: 700 33px/45px "Noto Sans CJK SC", sans-serif;
}
</style>
